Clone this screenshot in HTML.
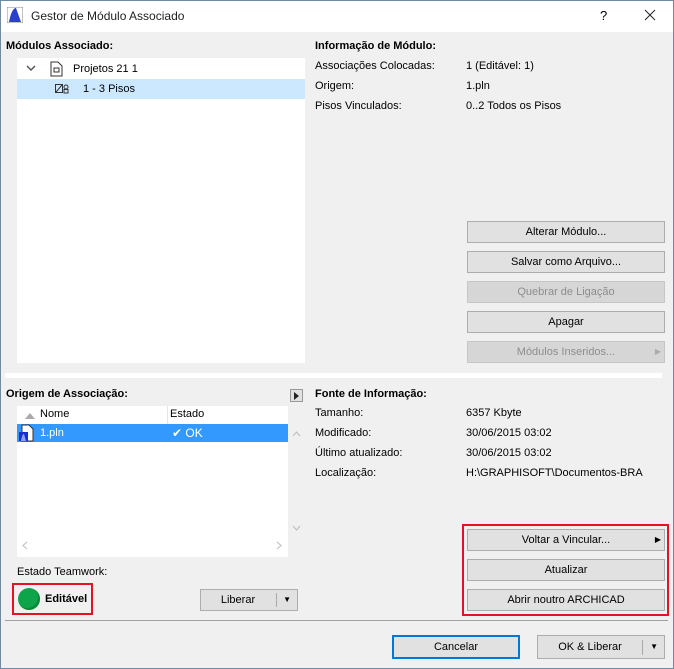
<!DOCTYPE html>
<html><head><meta charset="utf-8"><style>
*{box-sizing:border-box;margin:0;padding:0}
body{width:674px;height:669px;overflow:hidden;background:#f0f0f0;font-family:"Liberation Sans",sans-serif;font-size:11px;color:#000;position:relative}
.a{position:absolute;white-space:nowrap}
.b{font-weight:bold}
.btn{position:absolute;background:#e1e1e1;border:1px solid #adadad;text-align:center;line-height:20px;height:22px;font-size:11px}
.dis{color:#8d8d8d;background:#d6d6d6;border-color:#c6c6c6}
.red{position:absolute;border:2px solid #e81123}
</style></head><body>
<div class="a" style="left:0;top:0;width:674px;height:669px;border:1px solid #6d8aa8"></div>
<div class="a" style="left:1px;top:1px;width:672px;height:31px;background:#fff"></div>
<svg class="a" style="left:7px;top:7px" width="16" height="16"><rect x="0" y="0" width="16" height="16" fill="#fff" stroke="#888"/><path d="M2 15 C4 4 7 1 9 1 L14 15 Z" fill="#2a3fd0"/></svg>
<div class="a" style="left:31px;top:9px;font-size:12px;color:#222">Gestor de Módulo Associado</div>
<div class="a" style="left:600px;top:8px;font-size:13px">?</div>
<svg class="a" style="left:644px;top:9px" width="12" height="12"><path d="M1 1L11 11M11 1L1 11" stroke="#222" stroke-width="1"/></svg>

<div class="a b" style="left:6px;top:40px">Módulos Associado:</div>
<div class="a" style="left:17px;top:58px;width:288px;height:305px;background:#fff"></div>
<svg class="a" style="left:26px;top:64px" width="10" height="8"><path d="M1 2L5 6L9 2" stroke="#555" stroke-width="1.5" fill="none"/></svg>
<svg class="a" style="left:50px;top:61px" width="13" height="16"><path d="M1 1H8L12 5V15H1Z" fill="#fff" stroke="#333"/><rect x="4" y="7" width="5" height="4" fill="none" stroke="#333"/></svg>
<div class="a" style="left:73px;top:63px">Projetos 21 1</div>
<div class="a" style="left:17px;top:79px;width:288px;height:20px;background:#cce8ff"></div>
<svg class="a" style="left:55px;top:84px" width="15" height="10"><rect x="0.5" y="0.5" width="7" height="8" fill="none" stroke="#333"/><path d="M1 8L7 1" stroke="#333"/><circle cx="11" cy="3" r="2" fill="none" stroke="#333"/><rect x="9" y="5.5" width="4" height="3.5" fill="none" stroke="#333"/></svg>
<div class="a" style="left:83px;top:83px">1 - 3 Pisos</div>

<div class="a b" style="left:315px;top:40px">Informação de Módulo:</div>
<div class="a" style="left:315px;top:60px">Associações Colocadas:</div>
<div class="a" style="left:466px;top:60px">1 (Editável: 1)</div>
<div class="a" style="left:315px;top:80px">Origem:</div>
<div class="a" style="left:466px;top:80px">1.pln</div>
<div class="a" style="left:315px;top:100px">Pisos Vinculados:</div>
<div class="a" style="left:466px;top:100px">0..2 Todos os Pisos</div>

<div class="btn" style="left:467px;top:221px;width:198px">Alterar Módulo...</div>
<div class="btn" style="left:467px;top:251px;width:198px">Salvar como Arquivo...</div>
<div class="btn dis" style="left:467px;top:281px;width:198px">Quebrar de Ligação</div>
<div class="btn" style="left:467px;top:311px;width:198px">Apagar</div>
<div class="btn dis" style="left:467px;top:341px;width:198px">Módulos Inseridos...<span style="position:absolute;right:3px;top:0;font-size:8px;color:#aaa">▶</span></div>

<div class="a" style="left:5px;top:373px;width:657px;height:5px;background:#fff"></div>

<div class="a b" style="left:6px;top:388px">Origem de Associação:</div>
<div class="a" style="left:290px;top:389px;width:13px;height:13px;border:1px solid #999;background:#e1e1e1"></div>
<svg class="a" style="left:294px;top:392px" width="6" height="8"><path d="M0 0L5 4L0 8Z" fill="#222"/></svg>
<div class="a" style="left:17px;top:406px;width:271px;height:151px;background:#fff"></div>
<div class="a" style="left:167px;top:406px;width:1px;height:18px;background:#e5e5e5"></div>
<svg class="a" style="left:25px;top:413px" width="10" height="6"><path d="M0 6L5 0L10 6Z" fill="#aaa"/></svg>
<div class="a" style="left:40px;top:408px">Nome</div>
<div class="a" style="left:170px;top:408px">Estado</div>
<div class="a" style="left:17px;top:424px;width:271px;height:18px;background:#3399ff"></div>
<svg class="a" style="left:18px;top:424px" width="16" height="18"><path d="M4 1H11L15 5V17H4Z" fill="#fff" stroke="#333"/><rect x="1" y="8" width="9" height="9" fill="#1b2fd0"/><path d="M3 17C4 11 5 10 6 10L8 17" fill="#8fa0ff"/></svg>
<div class="a" style="left:40px;top:427px;color:#fff">1.pln</div>
<div class="a" style="left:172px;top:426px;color:#fff;font-size:12px">✔ OK</div>
<svg class="a" style="left:292px;top:431px" width="9" height="6"><path d="M1 5L4.5 1L8 5" stroke="#bbb" fill="none"/></svg>
<svg class="a" style="left:292px;top:525px" width="9" height="6"><path d="M1 1L4.5 5L8 1" stroke="#bbb" fill="none"/></svg>
<svg class="a" style="left:22px;top:541px" width="6" height="9"><path d="M5 1L1 4.5L5 8" stroke="#bbb" fill="none"/></svg>
<svg class="a" style="left:276px;top:541px" width="6" height="9"><path d="M1 1L5 4.5L1 8" stroke="#bbb" fill="none"/></svg>

<div class="a" style="left:17px;top:566px">Estado Teamwork:</div>
<div class="red" style="left:12px;top:583px;width:81px;height:32px"></div>
<div class="a" style="left:18px;top:588px;width:22px;height:22px;border-radius:50%;background:#0ea54a;box-shadow:inset -2px -2px 0 #0a8a3c"></div>
<div class="a b" style="left:45px;top:593px">Editável</div>
<div class="btn" style="left:200px;top:589px;width:98px;padding-right:22px">Liberar<span style="position:absolute;right:20px;top:3px;width:1px;height:14px;background:#aaa"></span><span style="position:absolute;right:6px;top:0;font-size:8px">▼</span></div>

<div class="a b" style="left:315px;top:388px">Fonte de Informação:</div>
<div class="a" style="left:315px;top:407px">Tamanho:</div>
<div class="a" style="left:466px;top:407px">6357 Kbyte</div>
<div class="a" style="left:315px;top:427px">Modificado:</div>
<div class="a" style="left:466px;top:427px">30/06/2015 03:02</div>
<div class="a" style="left:315px;top:447px">Último atualizado:</div>
<div class="a" style="left:466px;top:447px">30/06/2015 03:02</div>
<div class="a" style="left:315px;top:467px">Localização:</div>
<div class="a" style="left:466px;top:467px">H:\GRAPHISOFT\Documentos-BRA</div>

<div class="red" style="left:462px;top:524px;width:207px;height:92px"></div>
<div class="btn" style="left:467px;top:529px;width:198px">Voltar a Vincular...<span style="position:absolute;right:3px;top:0;font-size:8px">▶</span></div>
<div class="btn" style="left:467px;top:559px;width:198px">Atualizar</div>
<div class="btn" style="left:467px;top:589px;width:198px">Abrir noutro ARCHICAD</div>

<div class="a" style="left:5px;top:620px;width:663px;height:1px;background:#a0a0a0"></div>
<div class="btn" style="left:392px;top:635px;width:128px;height:24px;border:2px solid #0078d7;line-height:20px">Cancelar</div>
<div class="btn" style="left:537px;top:635px;width:128px;height:24px;padding-right:22px;line-height:22px">OK &amp; Liberar<span style="position:absolute;right:21px;top:4px;width:1px;height:15px;background:#aaa"></span><span style="position:absolute;right:6px;top:0;font-size:8px">▼</span></div>
</body></html>
